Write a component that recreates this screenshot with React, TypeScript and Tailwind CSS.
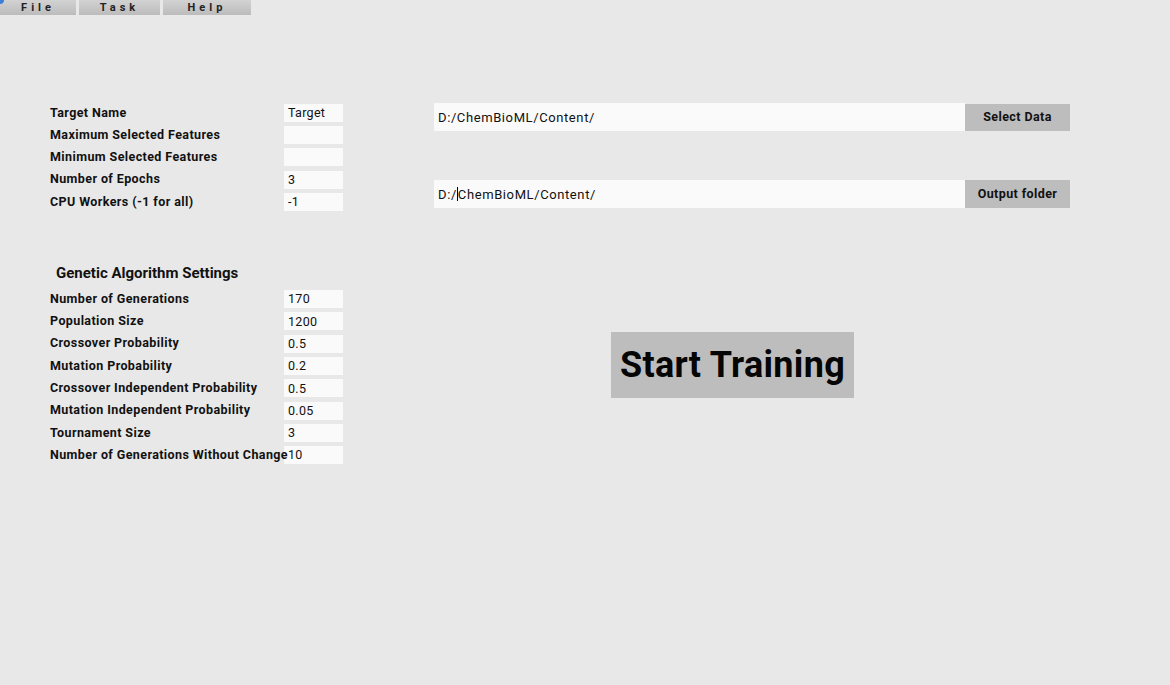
import React from "react";

const font = { fontFamily: "Roboto, 'Liberation Sans', sans-serif" };

function Row({ label, value, h }: { label: string; value: string; h: string }) {
  return (
    <div className={`flex items-center ${h}`}>
      <div className="relative z-10 w-[234px] text-[12.5px] tracking-[0.4px] font-bold text-[#111] whitespace-nowrap leading-none">{label}</div>
      <div className="w-[59px] h-[18px] bg-[#fafafa] text-[12.5px] tracking-[0.3px] text-[#111] pl-[4px] pt-[1px] flex items-center leading-none">
        {value}
      </div>
    </div>
  );
}

function MenuBtn({ label, w }: { label: string; w: string }) {
  return (
    <div
      className={`${w} h-[15px] bg-gradient-to-b from-[#d2d2d2] to-[#bcbcbc] flex items-center justify-center text-[11px] font-bold tracking-[4px] text-[#222] leading-none`}
    >
      {label}
    </div>
  );
}

export default function App() {
  const top = [
    ["Target Name", "Target"],
    ["Maximum Selected Features", ""],
    ["Minimum Selected Features", ""],
    ["Number of Epochs", "3"],
    ["CPU Workers (-1 for all)", "-1"],
  ];
  const ga = [
    ["Number of Generations", "170"],
    ["Population Size", "1200"],
    ["Crossover Probability", "0.5"],
    ["Mutation Probability", "0.2"],
    ["Crossover Independent Probability", "0.5"],
    ["Mutation Independent Probability", "0.05"],
    ["Tournament Size", "3"],
    ["Number of Generations Without Change", "10"],
  ];
  return (
    <div className="w-[1170px] h-[685px] bg-[#e8e8e8] overflow-hidden relative" style={font}>
      <div className="flex h-[15px] gap-[3px]">
        <MenuBtn label="File" w="w-[76px]" />
        <MenuBtn label="Task" w="w-[81px]" />
        <MenuBtn label="Help" w="w-[88px]" />
      </div>
      <div className="absolute left-0 top-0 w-[4px] h-[4px] bg-[#3b7fd6] rounded-br-full" />
      <div className="flex">
        <div className="pl-[50px] pt-[87px] flex flex-col">
          {top.map(([l, v]) => (
            <Row key={l} label={l} value={v} h="h-[22.2px]" />
          ))}
          <div className="h-[48px]" />
          <div className="pl-[6px] h-[25px] flex items-center text-[15px] font-bold text-[#111] leading-none">
            Genetic Algorithm Settings
          </div>
          <div className="h-[2px]" />
          {ga.map(([l, v]) => (
            <Row key={l} label={l} value={v} h="h-[22.3px]" />
          ))}
        </div>
        <div className="ml-[91px] pt-[88px] flex flex-col w-[636px]">
          <div className="flex h-[28px]">
            <div className="flex-1 bg-[#fafafa] pl-[4px] flex items-center text-[13px] tracking-[0.6px] text-[#111] leading-none">
              D:/ChemBioML/Content/
            </div>
            <div className="w-[105px] bg-[#bdbdbd] flex items-center justify-center text-[12.5px] tracking-[0.4px] font-bold text-[#111] leading-none mt-[1px]">
              Select Data
            </div>
          </div>
          <div className="h-[49px]" />
          <div className="flex h-[28px]">
            <div className="flex-1 bg-[#fafafa] pl-[4px] flex items-center text-[13px] tracking-[0.6px] text-[#111] leading-none">
              <span>D:/</span>
              <span className="inline-block w-[1px] h-[14px] bg-black" />
              <span>ChemBioML/Content/</span>
            </div>
            <div className="w-[105px] bg-[#bdbdbd] flex items-center justify-center text-[12.5px] tracking-[0.4px] font-bold text-[#111] leading-none">
              Output folder
            </div>
          </div>
          <div className="h-[124px]" />
          <div className="ml-[177px] w-[243px] h-[66px] bg-[#bdbdbd] flex items-center justify-center text-[36px] tracking-[0.3px] font-bold text-[#050505] leading-none">
            Start Training
          </div>
        </div>
      </div>
    </div>
  );
}
